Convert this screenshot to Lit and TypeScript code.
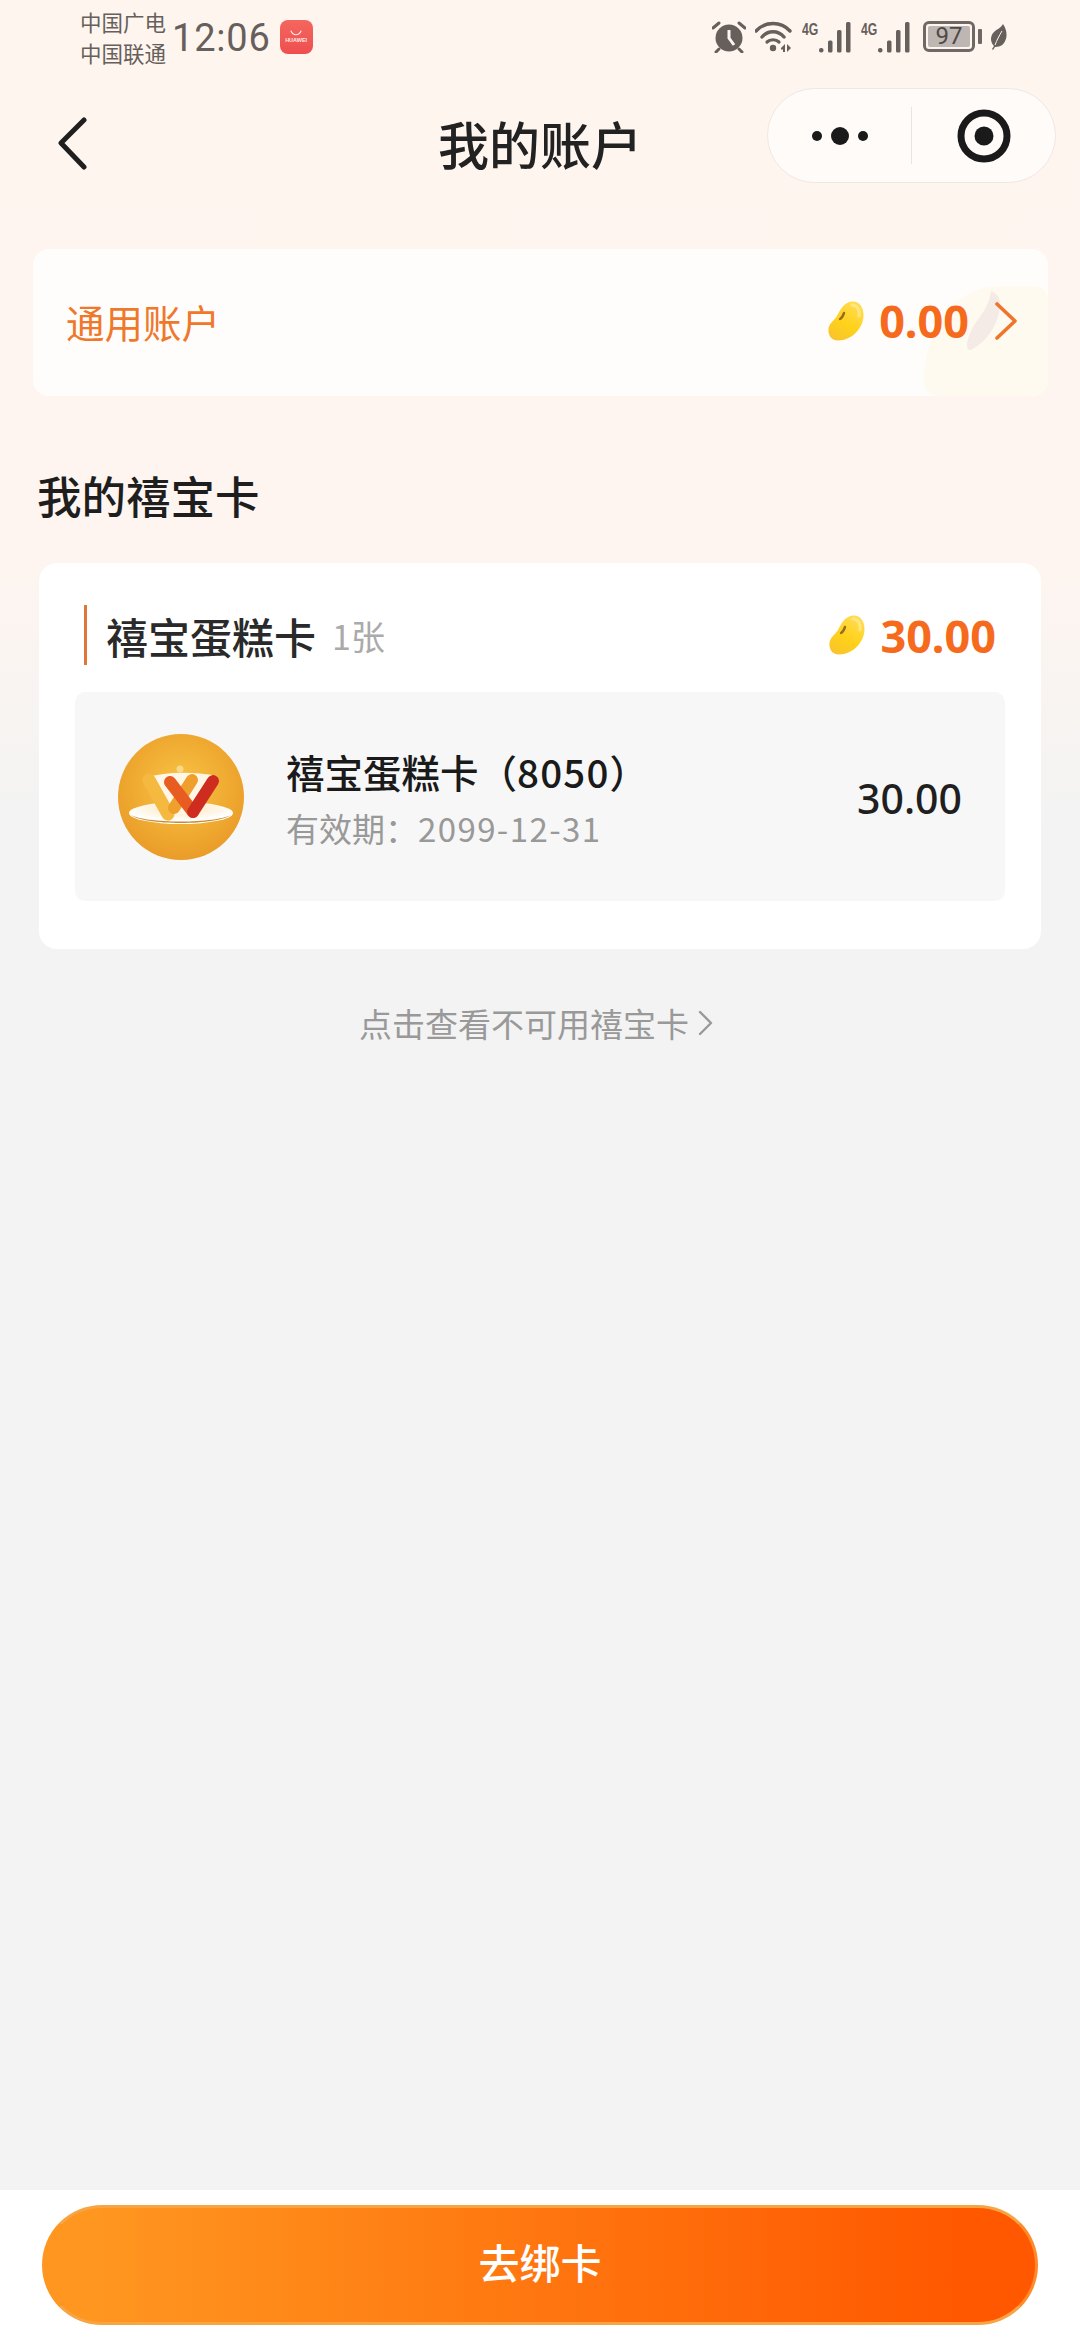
import { LitElement, html, css, svg } from "lit";
import { customElement } from "lit/decorators.js";

const bean = (id: string) => html`<svg class="bean" viewBox="0 0 36 40" aria-hidden="true">
  <defs>
    <linearGradient id=${id} x1="0.75" y1="0" x2="0.25" y2="1">
      <stop offset="0" stop-color="#ffdc55" /><stop offset="0.55" stop-color="#ffd21a" /><stop offset="1" stop-color="#f9c42a" />
    </linearGradient>
  </defs>
  <path d="M24 0.5C31 0 36 6 35.5 15C35 27 24 39.5 10 39.5C3 39.5 0 34 0.5 28C1 22 6 20 9 15C12 9 16 1 24 0.5Z" fill="url(#${id})" />
  <path d="M16 12C15 15 14 17 12 18" stroke="#9a6a22" stroke-width="2.4" stroke-linecap="round" fill="none" />
  <path d="M24 4C29 4 32 9 31 15" stroke="#ffe98e" stroke-width="3" stroke-linecap="round" fill="none" opacity=".8" />
</svg>`;

const signal = svg`<rect x="0" y="26" width="4.5" height="4.5" rx="2" /><rect x="9" y="18.5" width="4.5" height="12" rx="1.5" /><rect x="18" y="8" width="4.5" height="22.5" rx="1.5" /><rect x="27" y="0" width="4.5" height="30.5" rx="1.5" />`;

@customElement("app-root")
export class AppRoot extends LitElement {
  static styles = css`
    :host {
      display: block;
      width: 1080px;
      font-family: "Noto Sans CJK SC", "Noto Sans", sans-serif;
    }
    .page {
      height: 2340px;
      display: flex;
      flex-direction: column;
      background: linear-gradient(180deg, #fff5ef 0, #fff5f0 540px, #f3f3f3 820px);
    }
    .main { flex: 1; }

    .status {
      height: 75px;
      display: flex;
      align-items: center;
      padding: 0 73px 0 80px;
      color: #665f5b;
    }
    .carriers { display: flex; flex-direction: column; font-size: 21.5px; line-height: 31px; width: 90px; margin-bottom: 2px; }
    .time { font-family: Roboto, sans-serif; font-size: 38px; margin-left: 2px; letter-spacing: 0.8px; }
    .store {
      width: 33px; height: 34px; margin: 0 0 2px 9px; border-radius: 8px;
      background: linear-gradient(180deg, #f4665e, #ee4f4e);
      color: #ffe9e6; font: 700 5.5px/1 "Liberation Sans", sans-serif;
      display: flex; flex-direction: column; align-items: center; justify-content: center; gap: 2px;
    }
    .store svg { width: 12px; height: 6px; }
    .status-right { margin: 0 0 2px auto; display: flex; align-items: center; }
    .status-right svg { display: block; fill: #665f5b; }
    .net { display: flex; align-items: flex-start; margin-left: 10px; height: 32px; }
    .net span { font: 700 17px/17px "Liberation Sans", sans-serif; width: 17px; transform: scaleX(.72); transform-origin: left; }
    .net svg { margin-top: 1px; }
    .battery {
      margin-left: 13px; width: 52px; height: 31px; box-sizing: border-box;
      border: 3px solid #6f6864; border-radius: 6px; padding: 2px;
    }
    .battery div {
      height: 100%; background: #bdb6b2; border-radius: 2px; color: #4f4a47;
      font: 24px/21px Roboto, sans-serif; text-align: center;
    }
    .nub { width: 4px; height: 15px; background: #6f6864; border-radius: 1px; margin-left: 3px; }
    .leaf { margin-left: 8px; }

    .nav {
      margin-top: 13px;
      padding: 0 24px;
      height: 95px;
      display: grid;
      grid-template-columns: 1fr auto 1fr;
      align-items: center;
    }
    .back { display: block; margin: 17px 0 0 34px; }
    .title { font-size: 51px; font-weight: 500; line-height: 95px; color: #222; padding-top: 8px; box-sizing: border-box; height: 95px; }
    .capsule {
      justify-self: end;
      width: 289px; height: 95px; box-sizing: border-box;
      border: 1.5px solid #efe7e2; border-radius: 48px;
      background: rgba(255, 255, 255, .6);
      display: grid; grid-template-columns: 1fr 1px 1fr; align-items: center; justify-items: center;
    }
    .capsule .sep { width: 1px; height: 57px; background: #eae4df; }

    .account {
      position: relative; overflow: hidden;
      margin: 66px 32px 0 33px; height: 147px; box-sizing: border-box; padding: 0 30px 4px 33px;
      display: flex; align-items: center;
      background: #fffdfc; border-radius: 16px;
    }
    .deco {
      position: absolute; right: 0; bottom: 0; width: 124px; height: 110px;
      background: #fffaef; border-radius: 60% 14px 14px 14px / 85% 14px 14px 14px;
    }
    .account .leaf-deco { position: absolute; right: 47px; bottom: 45px; }
    .account > span, .account > .bean, .account > .chev { position: relative; }
    .account-name { font-size: 38.5px; color: #f0782a; }
    .amount {
      font-family: "Noto Sans", sans-serif; font-weight: 700; font-size: 45px;
      color: #f56a1c; line-height: 1;
    }
    .bean { width: 36px; height: 40px; display: block; }
    .account .bean { margin-left: auto; margin-right: 15px; }
    .account .chev { margin-left: 25px; }

    .section {
      margin: 66px 0 0 37px; font-size: 44.5px; font-weight: 500; line-height: 66px; color: #1e1e1e;
    }

    .card {
      margin: 35px 39px 0; height: 386px; box-sizing: border-box;
      background: #fff; border-radius: 18px; padding: 42px 36px 0;
    }
    .card-head { display: flex; align-items: center; height: 60px; padding-right: 9px; }
    .bar { width: 3px; height: 60px; background: #e0763a; margin: 0 19px 0 9px; }
    .card-title { font-size: 42px; font-weight: 500; color: #2a2a2a; }
    .count { font-size: 34px; color: #aaa; margin-left: 16px; }
    .card-head .bean { margin-left: auto; margin-right: 15px; }

    .item {
      margin-top: 27px; height: 209px; box-sizing: border-box;
      background: #f7f7f7; border-radius: 10px; padding: 0 43px;
      display: flex; align-items: center;
    }
    .logo { display: block; width: 126px; height: 126px; flex: none; }
    .info { margin: 6px 0 0 42px; display: flex; flex-direction: column; }
    .name { font-size: 38.5px; font-weight: 500; line-height: 52px; color: #1a1a1a; }
    .name b { font-weight: 500; letter-spacing: 1.2px; }
    .valid { font-size: 33px; line-height: 52px; color: #999; margin-top: 5px; }
    .valid b { font-weight: 400; letter-spacing: 1.4px; }
    .value { margin: 2px 0 0 auto; font-family: "Noto Sans", sans-serif; font-size: 41px; font-weight: 500; color: #1f1f1f; }

    .hint {
      margin-top: 50px; padding-right: 8px; display: flex; justify-content: center; align-items: center; gap: 9px;
      font-size: 33px; line-height: 48px; color: #999;
    }

    .foot { height: 150px; box-sizing: border-box; background: #fff; padding: 15px 42px 0; }
    .btn {
      height: 120px; box-sizing: border-box; border-radius: 60px; padding-bottom: 9px;
      border: 3px solid #f7a445; border-left-color: #ff9620; border-right-color: #ff8a2a;
      background: linear-gradient(90deg, #ff9620 5%, #ff5800 92%);
      color: #fff; font-size: 41px; font-weight: 500;
      display: flex; align-items: center; justify-content: center;
    }
  `;

  render() {
    return html`<div class="page">
      <div class="main">
        <div class="status">
          <div class="carriers"><span>中国广电</span><span>中国联通</span></div>
          <span class="time">12:06</span>
          <div class="store">
            <svg viewBox="0 0 12 6"><path d="M1 1C3 6 9 6 11 1" fill="none" stroke="#ffe9e6" stroke-width="1.2" stroke-linecap="round" /></svg>
            <span>HUAWEI</span>
          </div>
          <div class="status-right">
            <svg width="34" height="32" viewBox="0 0 34 32">
              <circle cx="17" cy="17" r="13.5" />
              <path d="M17 9V17L22 24" stroke="#fff5ef" stroke-width="3" fill="none" />
              <path d="M1 7L7 2M33 7L27 2" stroke="#665f5b" stroke-width="3" stroke-linecap="round" />
              <path d="M7 28L4 31M27 28L30 31" stroke="#665f5b" stroke-width="3" stroke-linecap="round" />
            </svg>
            <svg style="margin-left:9px" width="37" height="32" viewBox="0 0 37 32">
              <path d="M1 10C10 0 26 0 35 10" fill="none" stroke="#665f5b" stroke-width="3.4" stroke-linecap="round" />
              <path d="M7 16C13 9 23 9 29 16" fill="none" stroke="#665f5b" stroke-width="3.4" stroke-linecap="round" />
              <path d="M12 21C15 18 21 18 24 21" fill="none" stroke="#665f5b" stroke-width="3.2" stroke-linecap="round" />
              <circle cx="18" cy="27" r="3.2" />
              <path d="M26 27L30 23V31H28V28.5H26ZM32 23L36 27L32 31Z" />
            </svg>
            <div class="net"><span>4G</span><svg width="32" height="31" viewBox="0 0 32 31">${signal}</svg></div>
            <div class="net"><span>4G</span><svg width="32" height="31" viewBox="0 0 32 31">${signal}</svg></div>
            <div class="battery"><div>97</div></div>
            <div class="nub"></div>
            <svg class="leaf" width="17" height="26" viewBox="0 0 17 26"><path d="M13 0C17 6 18 13 14 19C12 22 8 23 5 23L3 26L2 25L4 22C0 18 0 12 4 8C7 5 11 4 13 0Z" /><path d="M5 21C7 16 9 12 12 7" stroke="#fff5ef" stroke-width="1" fill="none" /></svg>
          </div>
        </div>

        <div class="nav">
          <svg class="back" width="30" height="54" viewBox="0 0 30 54"><path d="M26 3L3 26L26 50" fill="none" stroke="#1f1f1f" stroke-width="5" stroke-linecap="round" stroke-linejoin="round" /></svg>
          <div class="title">我的账户</div>
          <div class="capsule">
            <svg width="70" height="20" viewBox="0 0 70 20" fill="#1a1a1a"><circle cx="12" cy="10" r="5" /><circle cx="35" cy="10" r="9" /><circle cx="58" cy="10" r="5" /></svg>
            <div class="sep"></div>
            <svg width="54" height="54" viewBox="0 0 54 54"><circle cx="27" cy="27" r="23" fill="none" stroke="#1a1a1a" stroke-width="7" /><circle cx="27" cy="27" r="9.5" fill="#1a1a1a" /></svg>
          </div>
        </div>

        <div class="account">
          <div class="deco"></div>
          <svg class="leaf-deco" width="34" height="60" viewBox="0 0 34 60"><path d="M24 0C34 4 34 12 32 22C28 38 18 52 4 59C0 60 -1 54 1 48C5 34 14 26 19 16C22 10 23 5 24 0Z" fill="#f4ebe6" /></svg>
          <span class="account-name">通用账户</span>
          ${bean("b1")}
          <span class="amount">0.00</span>
          <svg class="chev" width="24" height="38" viewBox="0 0 24 38"><path d="M3 2L21 19L3 36" fill="none" stroke="#f0752c" stroke-width="3.6" stroke-linecap="round" stroke-linejoin="round" /></svg>
        </div>

        <div class="section">我的禧宝卡</div>

        <div class="card">
          <div class="card-head">
            <div class="bar"></div>
            <span class="card-title">禧宝蛋糕卡</span>
            <span class="count">1张</span>
            ${bean("b2")}
            <span class="amount">30.00</span>
          </div>
          <div class="item">
            <svg class="logo" viewBox="0 0 126 126">
              <defs>
                <radialGradient id="lg" cx="50%" cy="42%" r="58%">
                  <stop offset="0" stop-color="#f9c544" /><stop offset="1" stop-color="#ea9c28" />
                </radialGradient>
                <radialGradient id="pl" cx="50%" cy="30%" r="55%">
                  <stop offset="0" stop-color="#fbe6bb" /><stop offset="1" stop-color="#ffffff" />
                </radialGradient>
              </defs>
              <circle cx="63" cy="63" r="63" fill="url(#lg)" />
              <ellipse cx="63" cy="79" rx="52" ry="11" fill="url(#pl)" />
              <path d="M11 80C25 92 100 92 115 80C100 90 25 90 11 80Z" fill="#c98a2a" />
              <path d="M27 44C50 37 75 38 99 42L76 80H48Z" fill="#fff6e6" />
              <circle cx="62" cy="35" r="3.5" fill="#f8d98a" />
              <path d="M31 46L50 80" stroke="#f4b93e" stroke-width="13" stroke-linecap="round" />
              <path d="M74 46L56 74" stroke="#ef9f2c" stroke-width="12" stroke-linecap="round" />
              <path d="M52 48L75 78" stroke="#e85c22" stroke-width="12" stroke-linecap="round" />
              <path d="M95 47L75 78" stroke="#cf2c20" stroke-width="12" stroke-linecap="round" />
            </svg>
            <div class="info">
              <span class="name">禧宝蛋糕卡（<b>8050</b>）</span>
              <span class="valid">有效期：<b>2099-12-31</b></span>
            </div>
            <span class="value">30.00</span>
          </div>
        </div>

        <div class="hint">
          <span>点击查看不可用禧宝卡</span>
          <svg width="15" height="26" viewBox="0 0 15 26"><path d="M2 2L13 13L2 24" fill="none" stroke="#999" stroke-width="2.4" stroke-linecap="round" stroke-linejoin="round" /></svg>
        </div>
      </div>

      <div class="foot"><div class="btn">去绑卡</div></div>
    </div>`;
  }
}
